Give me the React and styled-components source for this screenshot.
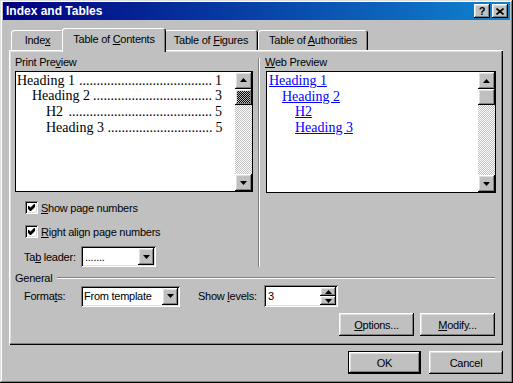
import React from 'react';
import styled, { createGlobalStyle } from 'styled-components';

const GlobalStyle = createGlobalStyle`
  html, body {
    margin: 0;
    padding: 0;
    background: #c0c0c0;
  }
  body {
    font-family: "Liberation Sans", Arial, sans-serif;
    font-size: 11px;
  }
  * {
    box-sizing: border-box;
  }
`;

const raised = `
  box-shadow: inset -1px -1px #000, inset 1px 1px #fff, inset -2px -2px #808080, inset 2px 2px #dfdfdf;
`;

const sunken = `
  box-shadow: inset 1px 1px #808080, inset -1px -1px #fff, inset 2px 2px #000, inset -2px -2px #dfdfdf;
`;

const Window = styled.div`
  display: flex;
  flex-direction: column;
  width: 513px;
  height: 383px;
  padding: 2px 3px 3px 3px;
  background: #c0c0c0;
  color: #000;
  letter-spacing: -0.25px;
  box-shadow: inset -1px -1px #000, inset 1px 1px #dfdfdf, inset -2px -2px #808080, inset 2px 2px #fff;
`;

const TitleBar = styled.div`
  display: flex;
  align-items: center;
  height: 18px;
  padding: 0 2px 0 3px;
  background: linear-gradient(to right, #000080, #1084d0);
`;

const Title = styled.div`
  color: #fff;
  font-weight: bold;
  font-size: 12px;
  letter-spacing: 0;
`;

const TitleButtons = styled.div`
  display: flex;
  gap: 2px;
  margin-left: auto;
`;

const TitleButton = styled.div`
  display: flex;
  align-items: center;
  justify-content: center;
  width: 16px;
  height: 14px;
  background: #c0c0c0;
  font-weight: bold;
  font-size: 11px;
  letter-spacing: 0;
  line-height: 14px;
  ${raised}
`;

const Body = styled.div`
  display: flex;
  flex-direction: column;
  flex: 1;
  padding: 8px 7px 0 6px;
`;

const TabRow = styled.div`
  display: flex;
  align-items: flex-end;
  height: 22px;
  padding-left: 2px;
  position: relative;
  z-index: 1;
`;

const Tab = styled.div`
  display: flex;
  align-items: center;
  justify-content: center;
  width: ${(p) => p.$w}px;
  height: ${(p) => (p.$active ? 24 : 20)}px;
  margin: ${(p) => (p.$active ? '0 -2px -2px -2px' : '0')};
  padding-bottom: ${(p) => (p.$active ? 3 : 0)}px;
  background: #c0c0c0;
  border-radius: 3px 3px 0 0;
  box-shadow: inset 1px 1px #fff, inset -1px 0 #000, inset -2px 0 #808080;
  white-space: nowrap;
  position: relative;
  z-index: ${(p) => (p.$active ? 2 : 1)};
`;

const Panel = styled.div`
  display: flex;
  flex-direction: column;
  height: 295px;
  padding: 6px 7px 0 6px;
  box-shadow: inset 1px 1px #fff, inset -1px -1px #000, inset -2px -2px #808080, inset 2px 2px #dfdfdf;
`;

const TopSection = styled.div`
  display: flex;
  height: 211px;
`;

const Column = styled.div`
  display: flex;
  flex-direction: column;
  width: ${(p) => p.$w}px;
`;

const GroupLabel = styled.div`
  height: 15px;
  line-height: 13px;
`;

const Preview = styled.div`
  display: flex;
  height: 122px;
  margin-left: ${(p) => p.$offset || 0}px;
  border: 1px solid #000;
  background: #fff;
`;

const PreviewBody = styled.div`
  flex: 1;
  padding: 1px 13px 0 ${(p) => p.$pad}px;
  font-family: "Liberation Serif", "Times New Roman", serif;
  font-size: 14px;
  line-height: 15.6px;
  letter-spacing: 0;
  overflow: hidden;
`;

const TocLine = styled.div`
  display: flex;
  white-space: nowrap;
  padding-left: ${(p) => p.$indent}px;
`;

const Leader = styled.span`
  flex: 1;
  text-align: right;
`;

const PageNum = styled.span`
  padding-left: 3px;
`;

const WebLink = styled.div`
  width: fit-content;
  margin-left: ${(p) => p.$indent}px;
  color: #0000ff;
  text-decoration: underline;
  white-space: nowrap;
`;

const Scrollbar = styled.div`
  display: flex;
  flex-direction: column;
  width: 17px;
  background-color: #fff;
  background-image: conic-gradient(#c0c0c0 25%, #fff 0 50%, #c0c0c0 0 75%, #fff 0);
  background-size: 2px 2px;
`;

const ScrollButton = styled.div`
  display: flex;
  align-items: center;
  justify-content: center;
  height: 17px;
  background: #c0c0c0;
  ${raised}
`;

const Thumb = styled.div`
  height: 16px;
  background-color: #c0c0c0;
  ${(p) =>
    p.$focused &&
    `background-image: conic-gradient(#000 25%, #c0c0c0 0 50%, #000 0 75%, #c0c0c0 0);
     background-size: 2px 2px;`}
  ${raised}
`;

const Track = styled.div`
  flex: 1;
`;

const Separator = styled.div`
  width: 2px;
  margin: 2px 5px 0 5px;
  border-left: 1px solid #808080;
  border-right: 1px solid #fff;
`;

const CheckList = styled.div`
  display: flex;
  flex-direction: column;
  gap: 7px;
  margin-top: 7px;
  padding-left: 10px;
`;

const CheckRow = styled.div`
  display: flex;
  align-items: center;
  height: 17px;
  gap: 3px;
`;

const CheckBox = styled.div`
  width: 13px;
  height: 13px;
  background: #fff;
  ${sunken}
`;

const FieldRow = styled.div`
  display: flex;
  align-items: center;
  margin-top: ${(p) => p.$mt}px;
  padding-left: 9px;
`;

const FieldLabel = styled.div`
  width: ${(p) => p.$w}px;
  margin-left: ${(p) => p.$ml || 0}px;
  white-space: nowrap;
`;

const Field = styled.div`
  display: flex;
  align-items: stretch;
  width: ${(p) => p.$w}px;
  height: ${(p) => p.$h}px;
  padding: 2px;
  background: #fff;
  ${sunken}
`;

const FieldText = styled.div`
  flex: 1;
  display: flex;
  align-items: center;
  padding-left: ${(p) => p.$pad}px;
  white-space: nowrap;
  overflow: hidden;
`;

const DropButton = styled.div`
  display: flex;
  align-items: center;
  justify-content: center;
  width: 16px;
  background: #c0c0c0;
  ${raised}
`;

const SpinButtons = styled.div`
  display: flex;
  flex-direction: column;
  width: 16px;
`;

const SpinButton = styled.div`
  display: flex;
  align-items: center;
  justify-content: center;
  flex: 1;
  background: #c0c0c0;
  ${raised}
`;

const GeneralHeader = styled.div`
  display: flex;
  align-items: center;
  height: 13px;
  margin-top: 4px;
`;

const EtchedLine = styled.div`
  flex: 1;
  height: 2px;
  margin: 0 1px 0 5px;
  border-top: 1px solid #808080;
  border-bottom: 1px solid #fff;
`;

const ButtonRow = styled.div`
  display: flex;
  justify-content: flex-end;
  gap: ${(p) => p.$gap}px;
  margin-top: ${(p) => p.$mt}px;
  padding-right: ${(p) => p.$pr || 0}px;
`;

const Button = styled.div`
  display: flex;
  align-items: center;
  justify-content: center;
  width: ${(p) => p.$w || 75}px;
  height: 23px;
  background: #c0c0c0;
  ${(p) =>
    p.$default
      ? `box-shadow: inset 0 0 0 1px #000, inset -2px -2px #000, inset 2px 2px #fff, inset -3px -3px #808080, inset 3px 3px #dfdfdf;`
      : raised}
`;

const U = styled.span`
  text-decoration: underline;
`;

const Arrow = ({ dir = 'down', w = 7 }) => {
  const h = Math.ceil(w / 2);
  const pts = dir === 'up' ? `0,${h} ${w},${h} ${w / 2},0` : `0,0 ${w},0 ${w / 2},${h}`;
  return (
    <svg width={w} height={h} viewBox={`0 0 ${w} ${h}`}>
      <polygon points={pts} fill="#000" />
    </svg>
  );
};

const Check = () => (
  <svg width="13" height="13" viewBox="0 0 13 13">
    <polygon points="3,5 3,8 5,10 6,10 10,6 10,3 9,3 5.5,6.5 4,5" fill="#000" />
  </svg>
);

const Close = () => (
  <svg width="8" height="7" viewBox="0 0 8 7">
    <path d="M0.5 0.5 L7.5 6.5 M7.5 0.5 L0.5 6.5" stroke="#000" strokeWidth="1.6" />
  </svg>
);

// dots counted so each leader fits its line
const toc = [
  { text: 'Heading 1\u00a0', page: 1, indent: 0, dots: 38 },
  { text: 'Heading 2', page: 3, indent: 15, dots: 34 },
  { text: 'H2\u00a0', page: 5, indent: 29, dots: 41 },
  { text: 'Heading 3\u00a0', page: 5, indent: 29, dots: 30 },
];

const web = [
  { text: 'Heading 1', indent: 0 },
  { text: 'Heading 2', indent: 13 },
  { text: 'H2', indent: 26 },
  { text: 'Heading 3', indent: 26 },
];

const tabs = [
  { label: <>Inde<U>x</U></>, w: 53 },
  { label: <>Table of <U>C</U>ontents</>, w: 104, active: true },
  { label: <>Table of <U>F</U>igures</>, w: 94 },
  { label: <>Table of <U>A</U>uthorities</>, w: 110 },
];

const ScrollBarView = ({ focused }) => (
  <Scrollbar>
    <ScrollButton>
      <Arrow dir="up" />
    </ScrollButton>
    <Thumb $focused={focused} />
    <Track />
    <ScrollButton>
      <Arrow dir="down" />
    </ScrollButton>
  </Scrollbar>
);

export default function App() {
  return (
    <>
      <GlobalStyle />
      <Window>
        <TitleBar>
          <Title>Index and Tables</Title>
          <TitleButtons>
            <TitleButton>?</TitleButton>
            <TitleButton>
              <Close />
            </TitleButton>
          </TitleButtons>
        </TitleBar>
        <Body>
          <TabRow>
            {tabs.map((t, i) => (
              <Tab key={i} $w={t.w} $active={t.active}>
                <span>{t.label}</span>
              </Tab>
            ))}
          </TabRow>
          <Panel>
            <TopSection>
              <Column $w={238}>
                <GroupLabel>
                  Print Pre<U>v</U>iew
                </GroupLabel>
                <Preview>
                  <PreviewBody $pad={1}>
                    {toc.map((row) => (
                      <TocLine key={row.text} $indent={row.indent}>
                        <span>{row.text}</span>
                        <Leader>{'.'.repeat(row.dots)}</Leader>
                        <PageNum>{row.page}</PageNum>
                      </TocLine>
                    ))}
                  </PreviewBody>
                  <ScrollBarView focused />
                </Preview>
                <CheckList>
                  <CheckRow>
                    <CheckBox>
                      <Check />
                    </CheckBox>
                    <span>
                      <U>S</U>how page numbers
                    </span>
                  </CheckRow>
                  <CheckRow>
                    <CheckBox>
                      <Check />
                    </CheckBox>
                    <span>
                      <U>R</U>ight align page numbers
                    </span>
                  </CheckRow>
                </CheckList>
                <FieldRow $mt={6}>
                  <FieldLabel $w={57}>
                    Ta<U>b</U> leader:
                  </FieldLabel>
                  <Field $w={75} $h={21}>
                    <FieldText $pad={2}>.......</FieldText>
                    <DropButton>
                      <Arrow dir="down" />
                    </DropButton>
                  </Field>
                </FieldRow>
              </Column>
              <Separator />
              <Column $w={232}>
                <GroupLabel>
                  <U>W</U>eb Preview
                </GroupLabel>
                <Preview $offset={1}>
                  <PreviewBody $pad={2}>
                    {web.map((row) => (
                      <WebLink key={row.text} $indent={row.indent}>
                        {row.text}
                      </WebLink>
                    ))}
                  </PreviewBody>
                  <ScrollBarView />
                </Preview>
              </Column>
            </TopSection>
            <GeneralHeader>
              <span>General</span>
              <EtchedLine />
            </GeneralHeader>
            <FieldRow $mt={1}>
              <FieldLabel $w={57}>
                Forma<U>t</U>s:
              </FieldLabel>
              <Field $w={99} $h={21}>
                <FieldText $pad={1}>From template</FieldText>
                <DropButton>
                  <Arrow dir="down" />
                </DropButton>
              </Field>
              <FieldLabel $w={66} $ml={18}>
                Show <U>l</U>evels:
              </FieldLabel>
              <Field $w={74} $h={22}>
                <FieldText $pad={2}>3</FieldText>
                <SpinButtons>
                  <SpinButton>
                    <Arrow dir="up" w={7} />
                  </SpinButton>
                  <SpinButton>
                    <Arrow dir="down" w={7} />
                  </SpinButton>
                </SpinButtons>
              </Field>
            </FieldRow>
            <ButtonRow $gap={6} $mt={6} $pr={1}>
              <Button>
                <span>
                  <U>O</U>ptions...
                </span>
              </Button>
              <Button>
                <span>
                  <U>M</U>odify...
                </span>
              </Button>
            </ButtonRow>
          </Panel>
          <ButtonRow $gap={8} $mt={6}>
            <Button $w={73} $default>
              OK
            </Button>
            <Button $w={74}>Cancel</Button>
          </ButtonRow>
        </Body>
      </Window>
    </>
  );
}
